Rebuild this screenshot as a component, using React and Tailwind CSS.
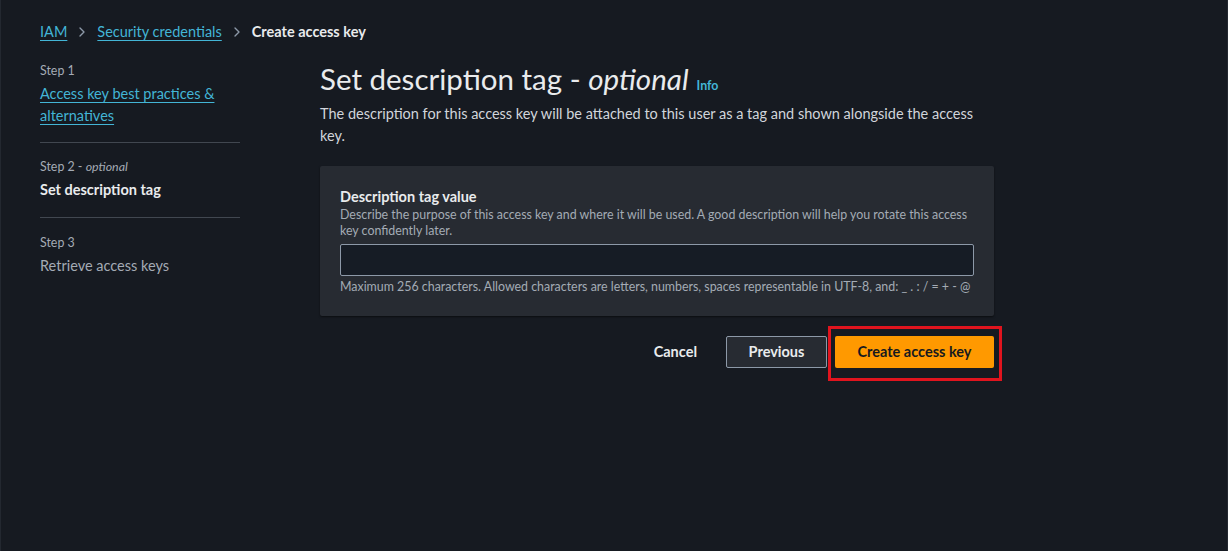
import { ChevronRight } from 'lucide-react';

const font = { fontFamily: 'Lato, "Liberation Sans", sans-serif' };

const Steps = () => (
    <div className="w-[200px] shrink-0">
        <div className="pb-[15px] border-b border-[#414750]">
            <div className="text-[12.4px] text-[#a4abb5] leading-4">Step 1</div>
            <a className="block mt-1 text-[14.5px] leading-[22px] text-[#43b5d6] underline underline-offset-[3px]">
                Access key best practices &amp; alternatives
            </a>
        </div>
        <div className="pt-4 pb-4 border-b border-[#414750]">
            <div className="text-[12.4px] text-[#a4abb5] leading-4">
                Step 2 - <i>optional</i>
            </div>
            <div className="mt-1 text-[14.5px] leading-[22px] font-bold text-[#e9ebed]">Set description tag</div>
        </div>
        <div className="pt-[17px]">
            <div className="text-[12.4px] text-[#a4abb5] leading-4">Step 3</div>
            <div className="mt-1 text-[14.5px] leading-[22px] text-[#a4abb5]">Retrieve access keys</div>
        </div>
    </div>
);

const App = () => {
    return (
        <div style={font} className="min-h-screen h-[551px] bg-[#161a21] text-[#d1d5db] border-x border-[#232830]">
            <div className="pl-[39px] pt-[21px] flex items-center gap-[7px] text-[14.5px] leading-[22px]">
                <a className="text-[#43b5d6] underline underline-offset-[3px]">IAM</a>
                <ChevronRight className="w-4 h-4 text-[#8d99a8]" strokeWidth={2} />
                <a className="text-[#43b5d6] underline underline-offset-[3px]">Security credentials</a>
                <ChevronRight className="w-4 h-4 text-[#8d99a8]" strokeWidth={2} />
                <span className="font-bold text-[#e9ebed]">Create access key</span>
            </div>

            <div className="flex pl-[39px] pt-[20px] gap-[80px]">
                <Steps />
                <div className="w-[674px]">
                    <div className="flex items-baseline gap-2 mt-[-3px]">
                        <h1 className="text-[29.5px] leading-[38px] text-[#e9ebed]">
                            Set description tag - <i>optional</i>
                        </h1>
                        <a className="text-[12.4px] font-bold text-[#43b5d6]">Info</a>
                    </div>
                    <p className="mt-[5px] text-[14.5px] leading-[22px] text-[#d1d5db]">
                        The description for this access key will be attached to this user as a tag and shown alongside the access key.
                    </p>

                    <div className="mt-[19px] bg-[#272b32] rounded-[2px] shadow-[0_1px_2px_rgba(0,0,0,0.5)] px-5 pt-[21px] pb-[21px]">
                        <label className="block text-[14.5px] leading-[20px] font-bold text-[#e9ebed]">Description tag value</label>
                        <div className="text-[12.4px] leading-4 text-[#a4abb5]">
                            Describe the purpose of this access key and where it will be used. A good description will help you rotate this access key confidently later.
                        </div>
                        <input
                            type="text"
                            className="mt-[5px] block w-full h-[32px] bg-[#161c25] border border-[#8d99a8] rounded-[2px] px-2 text-sm text-[#e9ebed] outline-none"
                        />
                        <div className="mt-[3px] text-[12.4px] leading-4 text-[#a4abb5]">
                            Maximum 256 characters. Allowed characters are letters, numbers, spaces representable in UTF-8, and: _ . : / = + - @
                        </div>
                    </div>

                    <div className="mt-[20px] flex justify-end items-start">
                        <button className="px-5 h-[32px] text-[14.5px] font-bold text-[#e9ebed]">Cancel</button>
                        <button className="ml-[9px] w-[101px] h-[32px] text-[14.5px] font-bold text-[#e9ebed] border border-[#8d99a8] rounded-[2px] bg-[#272b32]">
                            Previous
                        </button>
                        <div className="ml-[1px] mr-[-8px] mt-[-10px] mb-[-13px] border-[3px] border-[#e0141e] pl-[4px] pr-[5px] pt-[7px] pb-[10px]">
                            <button className="block w-[159px] h-[32px] text-[14.5px] font-bold text-[#16191f] bg-[#ff9900] rounded-[2px]">
                                Create access key
                            </button>
                        </div>
                    </div>
                </div>
            </div>
        </div>
    );
};

export default App;
